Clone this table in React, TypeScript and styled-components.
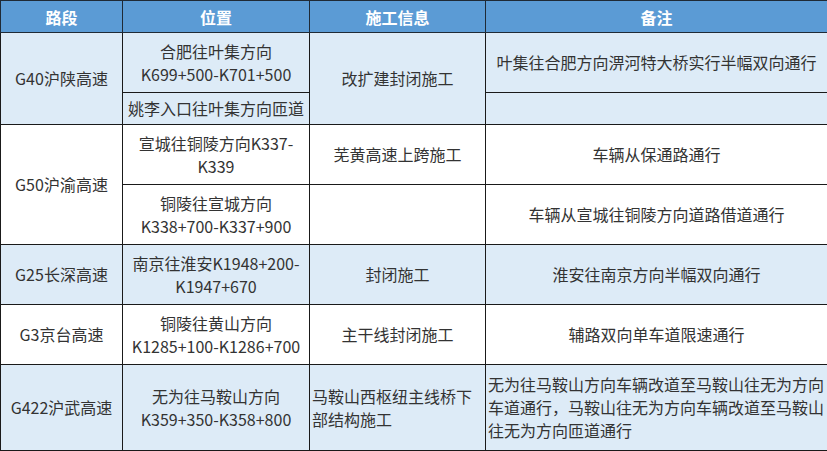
import React from 'react';
import styled, { createGlobalStyle } from 'styled-components';

const GlobalStyle = createGlobalStyle`
  html, body {
    margin: 0;
    padding: 0;
    background: #ffffff;
  }
  body {
    font-family: "Noto Sans CJK SC", "Microsoft YaHei", sans-serif;
  }
`;

const Table = styled.table`
  width: 827px;
  border-collapse: collapse;
  table-layout: fixed;
  font-size: 16px;
  color: #333333;
`;

const HeadRow = styled.tr`
  height: 32px;
  background: #5b9bd5;
`;

const HeadCell = styled.th`
  border: 1px solid #1f2a36;
  color: #ffffff;
  font-weight: 700;
  font-size: 16px;
  text-align: center;
  padding: 0;
`;

const Row = styled.tr<{ $shade?: boolean; $h: number }>`
  height: ${p => p.$h}px;
  background: ${p => (p.$shade ? '#ddebf7' : '#ffffff')};
`;

const Cell = styled.td<{ $left?: boolean }>`
  border: 1px solid #1a1a1a;
  padding: 0 2px;
  text-align: ${p => (p.$left ? 'left' : 'center')};
  vertical-align: middle;
  line-height: 23px;
  word-break: break-all;
`;

export default function App() {
  return (
    <>
      <GlobalStyle />
      <Table>
        <colgroup>
          <col style={{ width: 122 }} />
          <col style={{ width: 187 }} />
          <col style={{ width: 176 }} />
          <col style={{ width: 342 }} />
        </colgroup>
        <thead>
          <HeadRow>
            <HeadCell>路段</HeadCell>
            <HeadCell>位置</HeadCell>
            <HeadCell>施工信息</HeadCell>
            <HeadCell>备注</HeadCell>
          </HeadRow>
        </thead>
        <tbody>
          <Row $shade $h={60}>
            <Cell rowSpan={2}>G40沪陕高速</Cell>
            <Cell>合肥往叶集方向<br />K699+500-K701+500</Cell>
            <Cell rowSpan={2}>改扩建封闭施工</Cell>
            <Cell>叶集往合肥方向淠河特大桥实行半幅双向通行</Cell>
          </Row>
          <Row $shade $h={32}>
            <Cell>姚李入口往叶集方向匝道</Cell>
            <Cell></Cell>
          </Row>
          <Row $h={60}>
            <Cell rowSpan={2}>G50沪渝高速</Cell>
            <Cell>宣城往铜陵方向K337-<br />K339</Cell>
            <Cell>芜黄高速上跨施工</Cell>
            <Cell>车辆从保通路通行</Cell>
          </Row>
          <Row $h={60}>
            <Cell>铜陵往宣城方向<br />K338+700-K337+900</Cell>
            <Cell></Cell>
            <Cell>车辆从宣城往铜陵方向道路借道通行</Cell>
          </Row>
          <Row $shade $h={60}>
            <Cell>G25长深高速</Cell>
            <Cell>南京往淮安K1948+200-<br />K1947+670</Cell>
            <Cell>封闭施工</Cell>
            <Cell>淮安往南京方向半幅双向通行</Cell>
          </Row>
          <Row $h={60}>
            <Cell>G3京台高速</Cell>
            <Cell>铜陵往黄山方向<br />K1285+100-K1286+700</Cell>
            <Cell>主干线封闭施工</Cell>
            <Cell>辅路双向单车道限速通行</Cell>
          </Row>
          <Row $shade $h={86}>
            <Cell>G422沪武高速</Cell>
            <Cell>无为往马鞍山方向<br />K359+350-K358+800</Cell>
            <Cell $left>马鞍山西枢纽主线桥下部结构施工</Cell>
            <Cell $left>无为往马鞍山方向车辆改道至马鞍山往无为方向车道通行，马鞍山往无为方向车辆改道至马鞍山往无为方向匝道通行</Cell>
          </Row>
        </tbody>
      </Table>
    </>
  );
}
